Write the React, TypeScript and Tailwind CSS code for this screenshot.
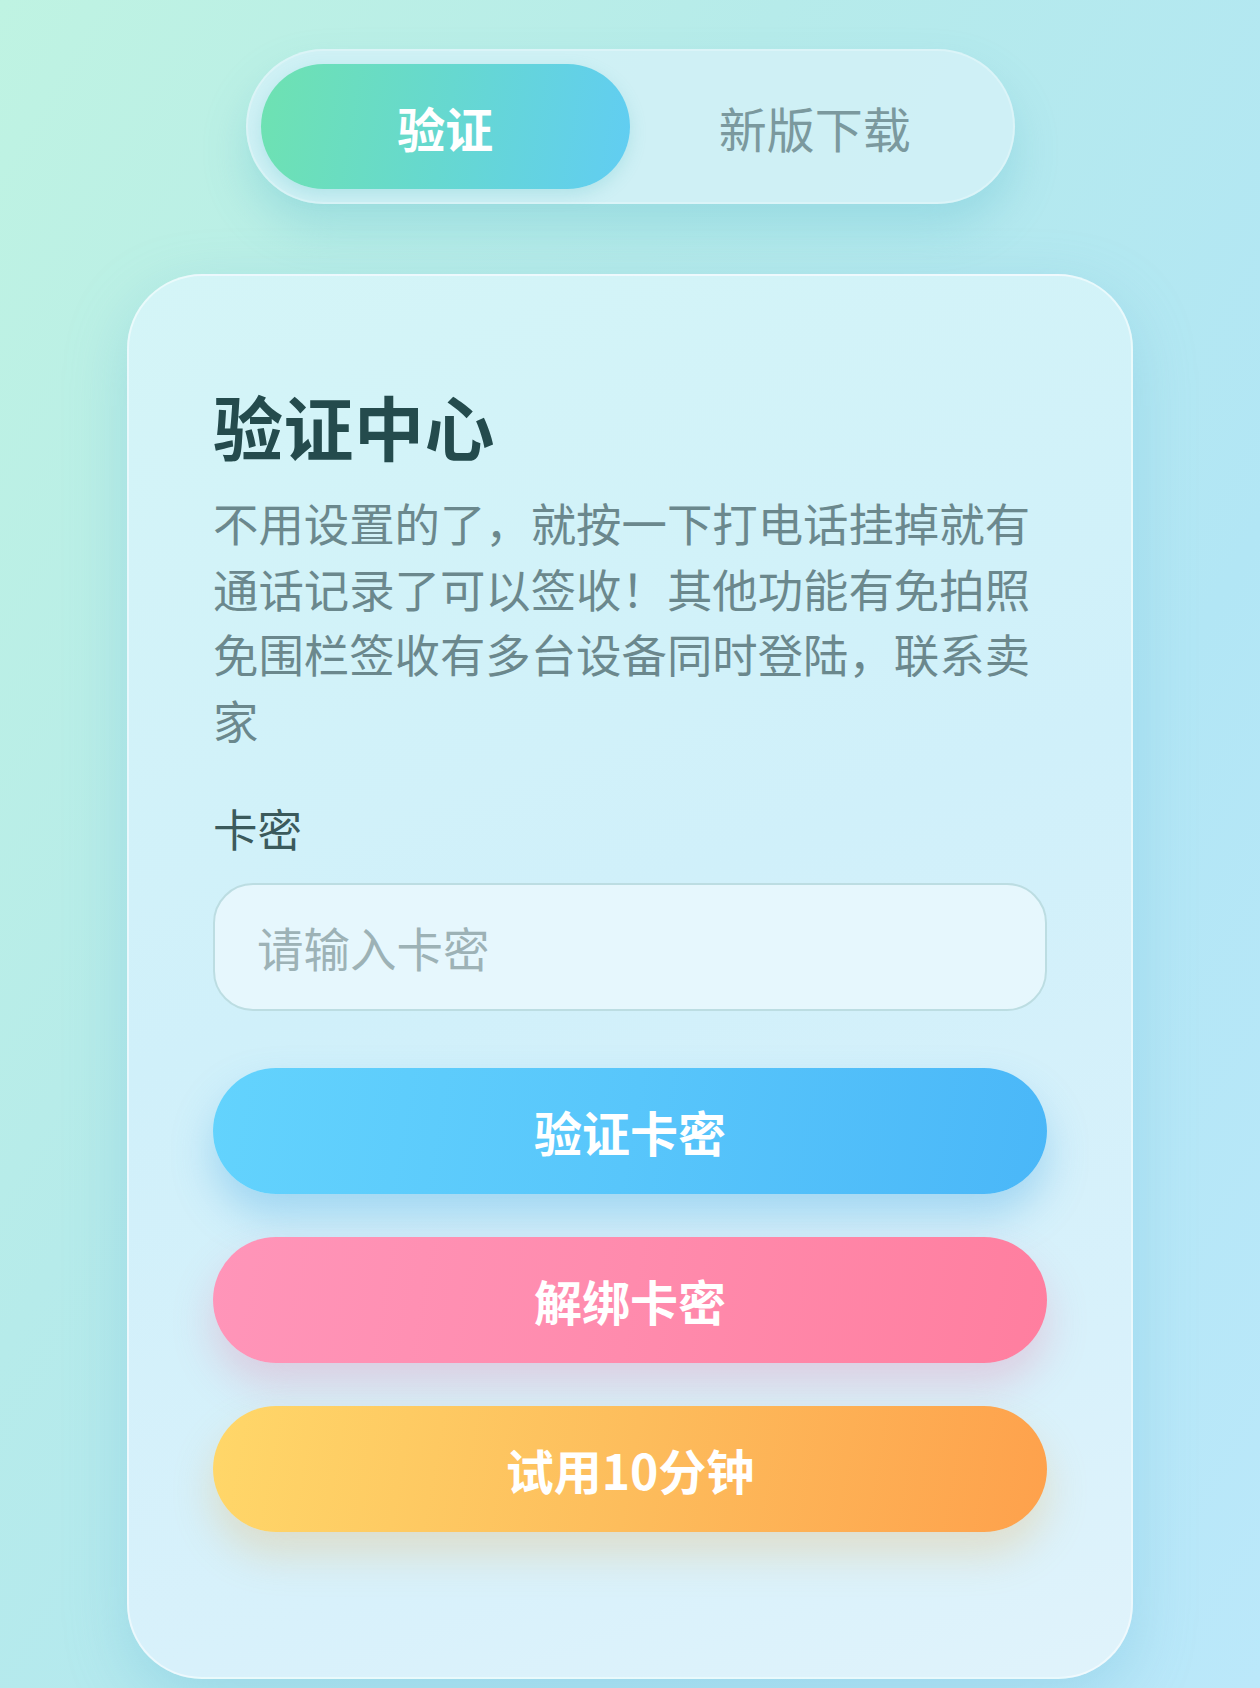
import React, { useState } from 'react';

const tabs = ['验证', '新版下载'];

const description =
  '不用设置的了，就按一下打电话挂掉就有通话记录了可以签收！其他功能有免拍照免围栏签收有多台设备同时登陆，联系卖家';

const actions = [
  {
    label: '验证卡密',
    className:
      'bg-[linear-gradient(100deg,#63d3fd_0%,#58c6fb_50%,#4ab7f8_100%)] shadow-[0_22px_40px_rgba(70,165,225,0.35)]',
  },
  {
    label: '解绑卡密',
    className:
      'bg-[linear-gradient(100deg,#ff95b9_0%,#ff8bad_50%,#ff7e9f_100%)] shadow-[0_22px_40px_rgba(235,125,165,0.3)]',
  },
  {
    label: '试用10分钟',
    className:
      'bg-[linear-gradient(100deg,#ffd769_0%,#fdbd5c_50%,#fea14c_100%)] shadow-[0_22px_40px_rgba(235,180,95,0.3)]',
  },
];

export default function App() {
  const [activeTab, setActiveTab] = useState('验证');
  const [cardKey, setCardKey] = useState('');

  return (
    <div className="w-full h-[1688px] overflow-hidden bg-[linear-gradient(120deg,#bff3e2_0%,#b6ebea_35%,#b2e6f5_70%,#bbe8fa_100%)] font-['Noto_Sans_CJK_SC','Noto_Sans',sans-serif] flex flex-col items-center">
      {/* Top tab switch */}
      <div className="mt-[49px] w-[769px] h-[155px] p-[13px] rounded-full bg-[#d1f1f6]/90 border-2 border-white/25 shadow-[0_24px_44px_rgba(90,185,205,0.3)] grid grid-cols-2">
        {tabs.map((tab) => {
          const isActive = activeTab === tab;
          return (
            <button
              key={tab}
              onClick={() => setActiveTab(tab)}
              className={`rounded-full flex items-center justify-center text-[48px] leading-none ${
                isActive
                  ? 'font-bold text-white bg-[linear-gradient(100deg,#6ee2b1_0%,#66d8d0_50%,#61cdf3_100%)] shadow-[0_6px_16px_rgba(90,190,200,0.25)]'
                  : 'text-[#7b999e]'
              }`}
            >
              {tab}
            </button>
          );
        })}
      </div>

      {/* Verification card */}
      <div className="mt-[70px] w-[1006px] h-[1405px] rounded-[75px] border-2 border-white/50 bg-[linear-gradient(160deg,#d4f5f7_0%,#d0f0fa_45%,#d8f1fb_80%,#e0f3fb_100%)] shadow-[0_20px_60px_rgba(110,185,215,0.35)] px-[84px] pt-[108px] flex flex-col">
        <h1 className="text-[70px] leading-[1.2] font-bold text-[#244b4d] tracking-[0.5px]">验证中心</h1>
        <p className="mt-[22px] text-[45.4px] leading-[65.5px] text-[#6b888d]">{description}</p>

        <label className="mt-[44px] text-[44.5px] leading-[1.45] text-[#3b5a5c]">卡密</label>
        <input
          value={cardKey}
          onChange={(e) => setCardKey(e.target.value)}
          placeholder="请输入卡密"
          className="mt-[22px] h-[128px] w-full rounded-[40px] border-2 border-[#bcdde2] bg-[#e6f7fd] px-[42px] text-[46.5px] text-[#3e5c5e] placeholder:text-[#9db2b6] outline-none"
        />

        <div className="mt-[57px] flex flex-col gap-[43px]">
          {actions.map((action) => (
            <button
              key={action.label}
              className={`h-[126px] w-full rounded-full text-white font-bold text-[48px] leading-none flex items-center justify-center ${action.className}`}
            >
              {action.label}
            </button>
          ))}
        </div>
      </div>
    </div>
  );
}
